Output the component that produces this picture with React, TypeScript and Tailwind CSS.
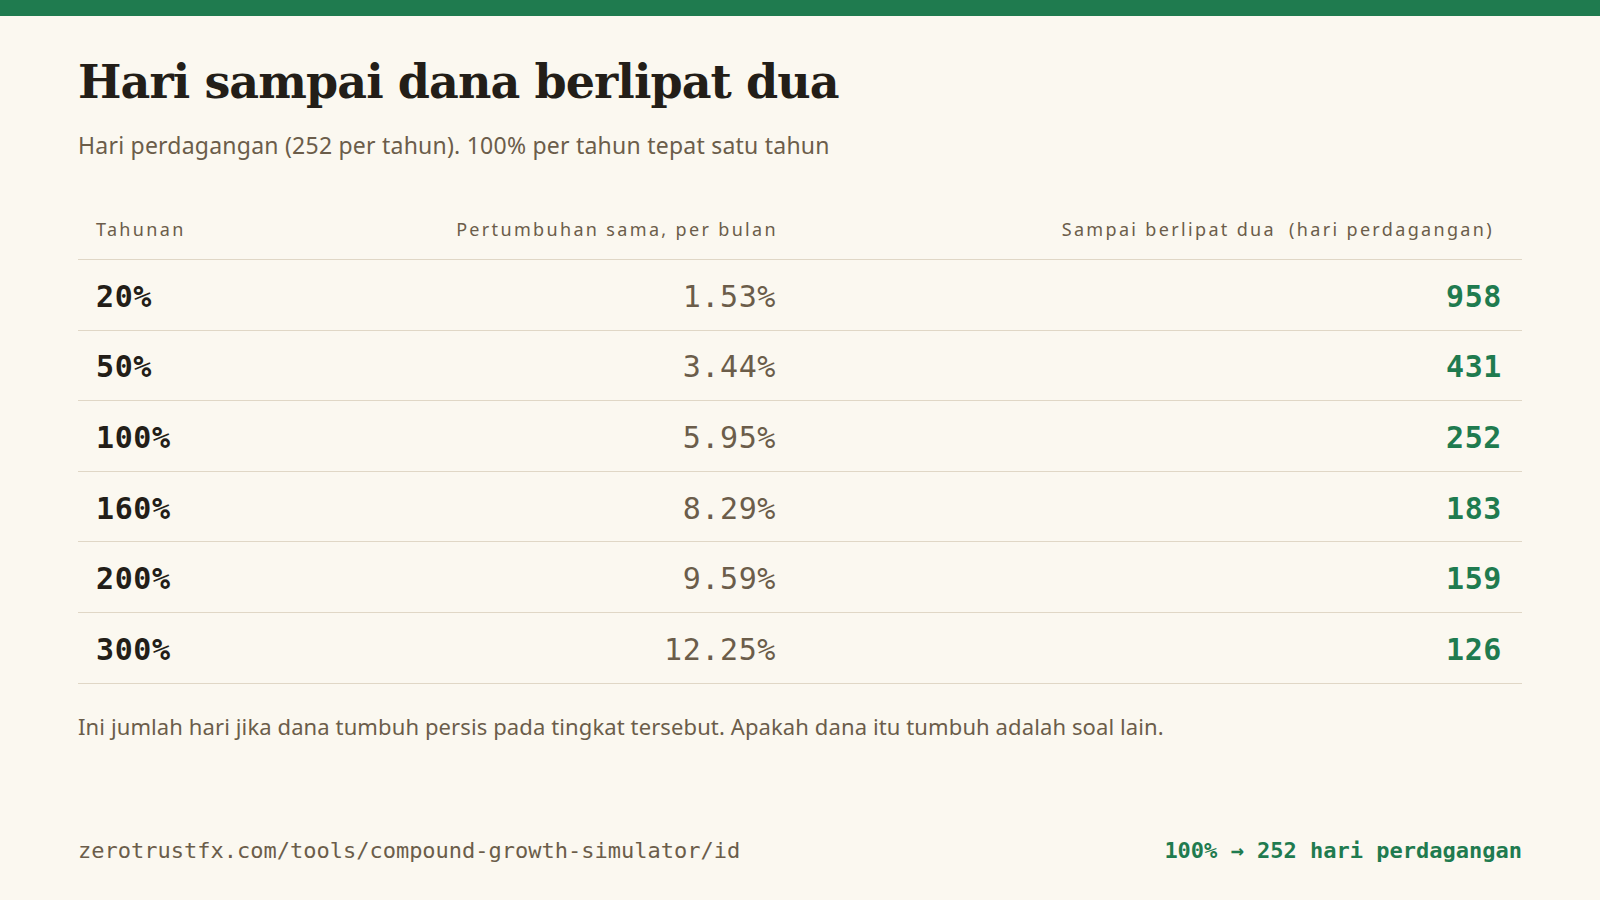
const rows = [
  { annual: '20%', monthly: '1.53%', days: '958' },
  { annual: '50%', monthly: '3.44%', days: '431' },
  { annual: '100%', monthly: '5.95%', days: '252' },
  { annual: '160%', monthly: '8.29%', days: '183' },
  { annual: '200%', monthly: '9.59%', days: '159' },
  { annual: '300%', monthly: '12.25%', days: '126' },
]

const mono = "font-['DejaVu_Sans_Mono',monospace]"
const sans = "font-['Noto_Sans',sans-serif]"

export default function App() {
  return (
    <div className="min-h-[900px] w-full bg-[#fbf8f0] flex flex-col">
      <div className="h-4 bg-[#1f7b4f]" />
      <div className="flex-1 flex flex-col px-[78px]">
        <h1 className="mt-[36px] font-['DejaVu_Serif',serif] font-bold text-[46px] leading-[60px] tracking-[-0.02em] text-[#231e18]">
          Hari sampai dana berlipat dua
        </h1>
        <p className={`${sans} mt-[18px] text-[23px] leading-[30px] tracking-[0.01em] text-[#6b5d4a]`}>
          Hari perdagangan (252 per tahun). 100% per tahun tepat satu tahun
        </p>

        {/* table */}
        <div className="mt-[39px]">
          <div className={`${sans} grid grid-cols-[300px_416px_1fr] h-[61px] items-center border-b border-[#e0d7c6] text-[18px] tracking-[0.13em] text-[#6b5d4a]`}>
            <div className="pl-[18px]">Tahunan</div>
            <div className="text-right pr-[16px]">Pertumbuhan sama, per bulan</div>
            <div className="text-right pr-[28px]">
              Sampai berlipat dua <span className="ml-[6px]">(hari perdagangan)</span>
            </div>
          </div>
          {rows.map((r) => (
            <div
              key={r.annual}
              className={`${mono} grid grid-cols-[300px_416px_1fr] h-[70.6px] pt-[3px] items-center border-b border-[#e0d7c6] text-[30px] tracking-[0.02em]`}
            >
              <div className="pl-[18px] font-bold text-[#231e18]">{r.annual}</div>
              <div className="text-right pr-[18px] text-[#6b5d4a]">{r.monthly}</div>
              <div className="text-right pr-[20px] font-bold text-[#1f7b4f]">{r.days}</div>
            </div>
          ))}
        </div>

        <p className={`${sans} mt-[28px] text-[22px] leading-[28px] tracking-[0.005em] text-[#6b5d4a]`}>
          Ini jumlah hari jika dana tumbuh persis pada tingkat tersebut. Apakah dana itu tumbuh adalah soal lain.
        </p>

        <div className={`${mono} mt-auto mb-[33px] flex items-center justify-between text-[22px]`}>
          <span className="text-[#6b5d4a]">zerotrustfx.com/tools/compound-growth-simulator/id</span>
          <span className="font-bold text-[#1f7b4f]">100% → 252 hari perdagangan</span>
        </div>
      </div>
    </div>
  )
}
